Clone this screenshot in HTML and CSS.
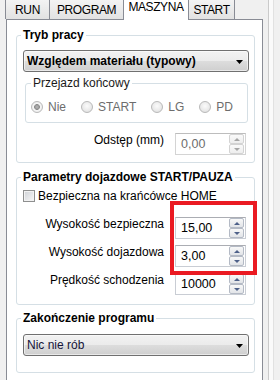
FILE: index.html
```html
<!DOCTYPE html>
<html lang="pl">
<head>
<meta charset="utf-8">
<title>Maszyna</title>
<link rel="stylesheet" href="styles.css">
</head>
<body>
<div class="window">
  <div class="main">
    <div class="tabs">
      <div class="tab tab-run">RUN</div>
      <div class="tab tab-program">PROGRAM</div>
      <div class="tab tab-maszyna active">MASZYNA</div>
      <div class="tab tab-start">START</div>
    </div>
    <div class="panel">
      <fieldset class="group g1">
        <legend>Tryb pracy</legend>
        <div class="combo bold">
          <span class="combo-text">Względem materiału (typowy)</span>
          <svg class="combo-arrow" width="7" height="4" viewBox="0 0 7 4"><polygon points="0,0 7,0 3.5,4" fill="#000"/></svg>
        </div>
        <fieldset class="group inner">
          <legend>Przejazd końcowy</legend>
          <div class="radios">
            <span class="radio"><span class="radio-circle checked"></span>Nie</span>
            <span class="radio"><span class="radio-circle"></span>START</span>
            <span class="radio"><span class="radio-circle"></span>LG</span>
            <span class="radio"><span class="radio-circle"></span>PD</span>
          </div>
        </fieldset>
        <div class="field first">
          <span class="label">Odstęp (mm)</span>
          <div class="spin disabled">
            <span class="spin-val">0,00</span>
            <span class="spin-btns"><span class="spin-btn"><span class="arr up"></span></span><span class="spin-btn"><span class="arr down"></span></span></span>
          </div>
        </div>
      </fieldset>

      <fieldset class="group g2">
        <legend>Parametry dojazdowe START/PAUZA</legend>
        <div class="check-row"><span class="checkbox"></span>Bezpieczna na krańcówce HOME</div>
        <div class="field first-after-check">
          <span class="label">Wysokość bezpieczna</span>
          <div class="spin">
            <span class="spin-val">15,00</span>
            <span class="spin-btns"><span class="spin-btn"><span class="arr up"></span></span><span class="spin-btn"><span class="arr down"></span></span></span>
          </div>
        </div>
        <div class="field">
          <span class="label">Wysokość dojazdowa</span>
          <div class="spin">
            <span class="spin-val">3,00</span>
            <span class="spin-btns"><span class="spin-btn"><span class="arr up"></span></span><span class="spin-btn"><span class="arr down"></span></span></span>
          </div>
        </div>
        <div class="field">
          <span class="label">Prędkość schodzenia</span>
          <div class="spin">
            <span class="spin-val">10000</span>
            <span class="spin-btns"><span class="spin-btn"><span class="arr up"></span></span><span class="spin-btn"><span class="arr down"></span></span></span>
          </div>
        </div>
      </fieldset>

      <fieldset class="group g3">
        <legend>Zakończenie programu</legend>
        <div class="combo">
          <span class="combo-text plain">Nic nie rób</span>
          <svg class="combo-arrow" width="7" height="4" viewBox="0 0 7 4"><polygon points="0,0 7,0 3.5,4" fill="#000"/></svg>
        </div>
      </fieldset>
    </div>
  </div>
  <div class="edge"></div>
</div>
<div class="highlight"></div>
</body>
</html>
```

FILE: styles.css
```css
html, body {
  margin: 0;
}

body {
  position: relative;
  height: 380px;
  overflow: hidden;
  background: #f0f0f0;
  font-family: "Liberation Sans", Arial, sans-serif;
  font-size: 12px;
  line-height: 14px;
  color: #000;
}

.window {
  display: flex;
  align-items: flex-start;
}

.main {
  width: 263px;
}

/* Tabs */
.tabs {
  display: flex;
  align-items: flex-end;
  height: 19px;
  padding-left: 5px;
}

.tab {
  box-sizing: border-box;
  height: 20px;
  margin-left: -1px;
  padding-top: 3px;
  border: 1px solid #898c95;
  border-bottom: 0;
  background: linear-gradient(#f3f3f3, #e2e2e2);
  font-size: 12px;
  letter-spacing: -0.4px;
  text-align: center;
  white-space: nowrap;
}

.tab:first-child {
  margin-left: 0;
}

.tab-run { width: 45px; }
.tab-program { width: 75px; }
.tab-maszyna { width: 66px; }
.tab-start { width: 47px; }

.tab.active {
  position: relative;
  z-index: 1;
  height: 21px;
  margin-bottom: -1px;
  padding-top: 0;
  background: #fff;
}

/* Panel */
.panel {
  box-sizing: border-box;
  width: 257px;
  margin-left: 6px;
  padding: 8px 7px 20px 9px;
  border: 1px solid #898c95;
  background: #fff;
}

/* Group boxes */
.group {
  min-width: 0;
  margin: 0;
  padding: 8px 5px 7px 6px;
  border: 1px solid #d5dfe5;
  border-radius: 3px;
}

.group legend {
  margin-left: -2px;
  padding: 0 2px;
  font-weight: bold;
  line-height: 14px;
}

.g2 {
  margin-top: 7px;
  padding-top: 5px;
  padding-bottom: 9px;
}

.g3 {
  margin-top: 6px;
  padding-top: 9px;
  padding-bottom: 16px;
}

.group.inner {
  margin: 4px 1px 0 2px;
  padding: 10px 5px 8px 5px;
}

.group.inner legend {
  margin-left: 0;
  font-weight: normal;
  color: #1a1a1a;
}

/* Combo box */
.combo {
  box-sizing: border-box;
  display: flex;
  align-items: flex-start;
  height: 22px;
  padding: 3px 5px 0 3px;
  border: 1px solid #707070;
  border-radius: 3px;
  background: linear-gradient(#f2f2f2 0%, #ebebeb 50%, #dddddd 50%, #cfcfcf 100%);
  box-shadow: inset 0 0 0 1px rgba(255, 255, 255, 0.55);
}

.combo-text {
  flex: 1;
  white-space: nowrap;
}

.combo.bold .combo-text {
  font-weight: bold;
}

.combo-text.plain {
  color: #15153a;
}

.combo-arrow {
  display: block;
  margin-top: 6px;
}

/* Radios */
.radios {
  display: flex;
  align-items: center;
  gap: 15px;
  height: 14px;
  color: #6d6d6d;
}

.radio {
  display: flex;
  align-items: center;
  gap: 5px;
}

.radio-circle {
  box-sizing: border-box;
  width: 12px;
  height: 12px;
  border: 1px solid #b9b9b9;
  border-radius: 50%;
  background: radial-gradient(circle at 50% 40%, #fbfbfb 0, #e9e9e9 60%, #d9d9d9 100%);
}

.radio-circle.checked {
  background: radial-gradient(circle at 50% 50%, #b8b8b8 0, #8e8e8e 2.6px, #f6f6f6 3.2px, #e6e6e6 100%);
}

/* Label + spin rows */
.field {
  display: flex;
  justify-content: flex-end;
  align-items: flex-start;
  gap: 11px;
  margin-top: 6px;
  padding-right: 3px;
}

.field.first {
  margin-top: 10px;
}

.field.first-after-check {
  margin-top: 14px;
}

.label {
  white-space: nowrap;
}

.spin {
  box-sizing: border-box;
  display: flex;
  width: 71px;
  height: 22px;
  padding-right: 1px;
  border: 1px solid #c9cdd4;
  border-top-color: #abadb3;
  background: #fff;
}

.spin-val {
  flex: 1;
  padding: 3px 0 0 5px;
  font-size: 12.5px;
}

.spin-btns {
  display: flex;
  flex-direction: column;
  width: 15px;
}

.spin-btn {
  box-sizing: border-box;
  display: flex;
  flex: 1;
  align-items: center;
  justify-content: center;
  border: 1px solid #b4bac5;
  border-radius: 2px;
  background: linear-gradient(#f8f8f8, #e2e4e8);
}

.arr {
  width: 0;
  height: 0;
  border-left: 3px solid transparent;
  border-right: 3px solid transparent;
}

.arr.up {
  border-bottom: 3px solid #4e6189;
}

.arr.down {
  border-top: 3px solid #4e6189;
}

.spin.disabled {
  border-color: #d4d4d4;
  border-top-color: #bdbdbd;
}

.spin.disabled .spin-val {
  color: #6d6d6d;
}

.spin.disabled .spin-btn {
  border-color: #d3d3d3;
  background: linear-gradient(#fafafa, #eeeeee);
}

.spin.disabled .arr.up {
  border-bottom-color: #a6a6a6;
}

.spin.disabled .arr.down {
  border-top-color: #a6a6a6;
}

/* Checkbox */
.check-row {
  display: flex;
  align-items: center;
  gap: 3px;
  height: 14px;
}

.checkbox {
  box-sizing: border-box;
  width: 12px;
  height: 12px;
  border: 1px solid #8e8f8f;
  background: linear-gradient(135deg, #cfd2d7, #f7f7f7);
  box-shadow: inset 0 0 0 1px #f2f2f2;
}

/* Right window edge */
.edge {
  box-sizing: content-box;
  width: 4px;
  height: 380px;
  margin-left: 5px;
  border-left: 1px solid #cacaca;
  border-right: 1px solid #e1e1e1;
  background: #fafafa;
}

/* Annotation overlay */
.highlight {
  position: absolute;
  left: 170px;
  top: 201px;
  box-sizing: border-box;
  width: 87px;
  height: 74px;
  border: 4px solid #ea1a22;
}
```
